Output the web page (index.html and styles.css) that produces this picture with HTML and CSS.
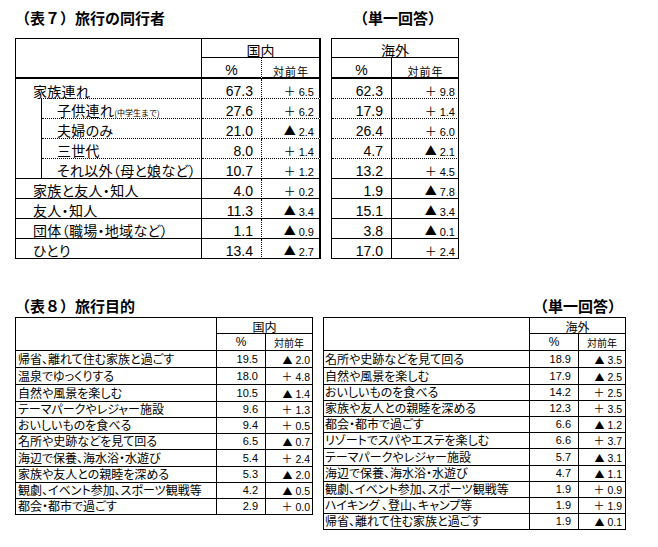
FILE: index.html
```html
<!DOCTYPE html>
<html lang="ja">
<head>
<meta charset="utf-8">
<title>旅行の同行者・旅行目的</title>
<link rel="stylesheet" href="styles.css">
</head>
<body>
<div class="page">
  <div class="title-row r1">
    <span>（表７）旅行の同行者</span>
    <span>（単一回答）</span>
  </div>
  <div class="tables s1">
    <div class="grid g1l">
      <div class="c hblank hb"></div>
      <div class="c hgrp last">国内</div>
      <div class="c hsub pct dotr hb">%</div>
      <div class="c hsub yoy last hb">対前年</div>

      <div class="c lab fam"><span>家族連れ</span></div>
      <div class="c num dotr dotb">67.3</div>
      <div class="c chg last dotb"><span><em class="pl">＋</em> 6.5</span></div>

      <div class="c indent"></div>
      <div class="c lab sub dotb"><span>子供連れ<small>(中学生まで)</small></span></div>
      <div class="c num dotr dotb">27.6</div>
      <div class="c chg last dotb"><span><em class="pl">＋</em> 6.2</span></div>

      <div class="c lab sub dotb">夫婦のみ</div>
      <div class="c num dotr dotb">21.0</div>
      <div class="c chg last dotb"><span><em class="tri">▲</em> 2.4</span></div>

      <div class="c lab sub dotb">三世代</div>
      <div class="c num dotr dotb">8.0</div>
      <div class="c chg last dotb"><span><em class="pl">＋</em> 1.4</span></div>

      <div class="c lab sub">それ以外（母と娘など）</div>
      <div class="c num dotr">10.7</div>
      <div class="c chg last"><span><em class="pl">＋</em> 1.2</span></div>

      <div class="c lab full">家族と友人・知人</div>
      <div class="c num dotr">4.0</div>
      <div class="c chg last"><span><em class="pl">＋</em> 0.2</span></div>

      <div class="c lab full">友人・知人</div>
      <div class="c num dotr">11.3</div>
      <div class="c chg last"><span><em class="tri">▲</em> 3.4</span></div>

      <div class="c lab full">団体（職場・地域など）</div>
      <div class="c num dotr">1.1</div>
      <div class="c chg last"><span><em class="tri">▲</em> 0.9</span></div>

      <div class="c lab full">ひとり</div>
      <div class="c num dotr">13.4</div>
      <div class="c chg last"><span><em class="tri">▲</em> 2.7</span></div>
    </div>

    <div class="grid g1r">
      <div class="c hgrp">海外</div>
      <div class="c hsub pct hb">%</div>
      <div class="c hsub yoy hb">対前年</div>

      <div class="c num dotb">62.3</div>
      <div class="c chg r dotb"><span><em class="pl">＋</em> 9.8</span></div>
      <div class="c num dotb">17.9</div>
      <div class="c chg r dotb"><span><em class="pl">＋</em> 1.4</span></div>
      <div class="c num dotb">26.4</div>
      <div class="c chg r dotb"><span><em class="pl">＋</em> 6.0</span></div>
      <div class="c num dotb">4.7</div>
      <div class="c chg r dotb"><span><em class="tri">▲</em> 2.1</span></div>
      <div class="c num">13.2</div>
      <div class="c chg r"><span><em class="pl">＋</em> 4.5</span></div>
      <div class="c num">1.9</div>
      <div class="c chg r"><span><em class="tri">▲</em> 7.8</span></div>
      <div class="c num">15.1</div>
      <div class="c chg r"><span><em class="tri">▲</em> 3.4</span></div>
      <div class="c num">3.8</div>
      <div class="c chg r"><span><em class="tri">▲</em> 0.1</span></div>
      <div class="c num">17.0</div>
      <div class="c chg r"><span><em class="pl">＋</em> 2.4</span></div>
    </div>
  </div>

  <div class="title-row r2">
    <span>（表８）旅行目的</span>
    <span>（単一回答）</span>
  </div>
  <div class="tables s2">
    <div class="grid g2 g2l">
      <div class="c hblank"></div>
      <div class="c hgrp">国内</div>
      <div class="c hsub pct">%</div>
      <div class="c hsub yoy">対前年</div>

      <div class="c lab">帰省、離れて住む家族と過ごす</div>
      <div class="c num">19.5</div>
      <div class="c chg"><span><em class="tri">▲</em> 2.0</span></div>
      <div class="c lab">温泉でゆっくりする</div>
      <div class="c num">18.0</div>
      <div class="c chg"><span><em class="pl">＋</em> 4.8</span></div>
      <div class="c lab">自然や風景を楽しむ</div>
      <div class="c num">10.5</div>
      <div class="c chg"><span><em class="tri">▲</em> 1.4</span></div>
      <div class="c lab">テーマパークやレジャー施設</div>
      <div class="c num">9.6</div>
      <div class="c chg"><span><em class="pl">＋</em> 1.3</span></div>
      <div class="c lab">おいしいものを食べる</div>
      <div class="c num">9.4</div>
      <div class="c chg"><span><em class="pl">＋</em> 0.5</span></div>
      <div class="c lab">名所や史跡などを見て回る</div>
      <div class="c num">6.5</div>
      <div class="c chg"><span><em class="tri">▲</em> 0.7</span></div>
      <div class="c lab">海辺で保養、海水浴・水遊び</div>
      <div class="c num">5.4</div>
      <div class="c chg"><span><em class="pl">＋</em> 2.4</span></div>
      <div class="c lab">家族や友人との親睦を深める</div>
      <div class="c num">5.3</div>
      <div class="c chg"><span><em class="tri">▲</em> 2.0</span></div>
      <div class="c lab">観劇、イベント参加、スポーツ観戦等</div>
      <div class="c num">4.2</div>
      <div class="c chg"><span><em class="tri">▲</em> 0.5</span></div>
      <div class="c lab">都会・都市で過ごす</div>
      <div class="c num">2.9</div>
      <div class="c chg"><span><em class="pl">＋</em> 0.0</span></div>
    </div>

    <div class="grid g2 g2r">
      <div class="c hblank"></div>
      <div class="c hgrp">海外</div>
      <div class="c hsub pct">%</div>
      <div class="c hsub yoy">対前年</div>

      <div class="c lab">名所や史跡などを見て回る</div>
      <div class="c num">18.9</div>
      <div class="c chg"><span><em class="tri">▲</em> 3.5</span></div>
      <div class="c lab">自然や風景を楽しむ</div>
      <div class="c num">17.9</div>
      <div class="c chg"><span><em class="tri">▲</em> 2.5</span></div>
      <div class="c lab">おいしいものを食べる</div>
      <div class="c num">14.2</div>
      <div class="c chg"><span><em class="pl">＋</em> 2.5</span></div>
      <div class="c lab">家族や友人との親睦を深める</div>
      <div class="c num">12.3</div>
      <div class="c chg"><span><em class="pl">＋</em> 3.5</span></div>
      <div class="c lab">都会・都市で過ごす</div>
      <div class="c num">6.6</div>
      <div class="c chg"><span><em class="tri">▲</em> 1.2</span></div>
      <div class="c lab">リゾートでスパやエステを楽しむ</div>
      <div class="c num">6.6</div>
      <div class="c chg"><span><em class="pl">＋</em> 3.7</span></div>
      <div class="c lab">テーマパークやレジャー施設</div>
      <div class="c num">5.7</div>
      <div class="c chg"><span><em class="tri">▲</em> 3.1</span></div>
      <div class="c lab">海辺で保養、海水浴・水遊び</div>
      <div class="c num">4.7</div>
      <div class="c chg"><span><em class="tri">▲</em> 1.1</span></div>
      <div class="c lab">観劇、イベント参加、スポーツ観戦等</div>
      <div class="c num">1.9</div>
      <div class="c chg"><span><em class="pl">＋</em> 0.9</span></div>
      <div class="c lab">ハイキング 、登山、キャンプ等</div>
      <div class="c num">1.9</div>
      <div class="c chg"><span><em class="pl">＋</em> 1.9</span></div>
      <div class="c lab">帰省、離れて住む家族と過ごす</div>
      <div class="c num">1.9</div>
      <div class="c chg"><span><em class="tri">▲</em> 0.1</span></div>
    </div>
  </div>
</div>
</body>
</html>
```
FILE: styles.css
```css
* { box-sizing: border-box; }
html, body { margin: 0; padding: 0; background: #fff; }
body {
  color: #000;
  font-family: "Liberation Sans", "Noto Sans CJK JP", sans-serif;
}
.page { width: 658px; height: 547px; padding: 8px 0 0 15px; overflow: hidden; }

.title-row {
  display: flex;
  justify-content: space-between;
  align-items: center;
  height: 20px;
  line-height: 20px;
  font-family: "Noto Sans CJK JP", sans-serif;
  font-weight: bold;
  font-size: 15px;
  white-space: nowrap;
}
.title-row.r1 { width: 428px; }
.title-row.r2 { width: 608px; margin-top: 37px; }

.tables { display: flex; gap: 10px; align-items: flex-start; }
.tables.s1 { margin-top: 10px; }
.tables.s2 { margin-top: 1px; }

.grid { display: grid; border-left: 1px solid #000; border-top: 1px solid #000; }
.g1l { grid-template-columns: 26px 160px 60px 59px; grid-template-rows: 19px 21px repeat(9, 20px); }
.g1r { grid-template-columns: 60px 67px; grid-template-rows: 19px 21px repeat(9, 20px); }
.g2l { grid-template-columns: 201px 49px 47px; grid-template-rows: 16px 17px 17px 17px 17px 16px 16px 16px 17px 16px 16px 16px; }
.g2r { grid-template-columns: 206px 49px 47px; grid-template-rows: 16px 17px 17px 17px 16px 16px 16px 16px 17px 16px 16px 16px 16px; }

.c {
  border-right: 1px solid #000;
  border-bottom: 1px solid #000;
  display: flex;
  align-items: flex-end;
  white-space: nowrap;
  line-height: 1;
  min-width: 0;
}
.dotr { border-right-style: dotted; }
.dotb { border-bottom-style: dotted; }
.hb { border-bottom-width: 2px; }
.last { border-right-width: 2px; }

.hblank { grid-column: span 2; grid-row: span 2; }
.g2 .hblank { grid-column: span 1; }
.hgrp { grid-column: span 2; justify-content: center; font-family: "Noto Sans CJK JP", sans-serif; font-size: 14px; }
.hsub { justify-content: center; }
.pct { font-size: 14px; }
.yoy { font-family: "Noto Sans CJK JP", sans-serif; font-size: 11px; letter-spacing: 1px; padding-left: 1px; }

.lab { font-family: "Noto Sans CJK JP", sans-serif; font-feature-settings: "palt"; }
.g1l .lab { font-size: 14px; letter-spacing: 0.3px; padding: 0 0 1px 17px; }
.g1l .lab.fam { grid-column: span 2; border-bottom: none; position: relative; }
.g1l .lab.fam::after {
  content: "";
  position: absolute;
  left: 25px; right: -1px; bottom: 0;
  border-bottom: 1px dotted #000;
}
.g1l .lab.full { grid-column: span 2; }
.g1l .lab.sub { padding-left: 15px; }
.indent { grid-row: span 4; }
.lab small { font-size: 8px; letter-spacing: 0; font-feature-settings: normal; }

.num { justify-content: flex-end; font-size: 14px; padding-right: 8px; }
.chg { justify-content: flex-end; font-size: 11px; padding-right: 5px; }
.chg.r { padding-right: 3px; }
.chg em { font-style: normal; font-family: "Noto Sans CJK JP", sans-serif; }
.chg .pl { font-size: 12px; }
.chg .tri { font-size: 12px; }

.g2 .hgrp { font-size: 12px; }
.g2 .pct { font-size: 12px; padding-bottom: 2px; }
.g2 .yoy { font-size: 10px; letter-spacing: 0; padding: 0 0 2px; }
.g2 .lab { font-size: 12px; padding: 0 0 2px 2px; }
.g2r .lab { padding-left: 1px; }
.g2 .num { font-size: 11px; padding: 0 7px 2px 0; }
.g2 .chg { font-size: 10.5px; padding: 0 2px 2px 0; }
.g2r .chg { padding-right: 3px; }
.g2 .chg .pl { font-size: 11px; }
.g2 .chg .tri { font-size: 10px; }
```
